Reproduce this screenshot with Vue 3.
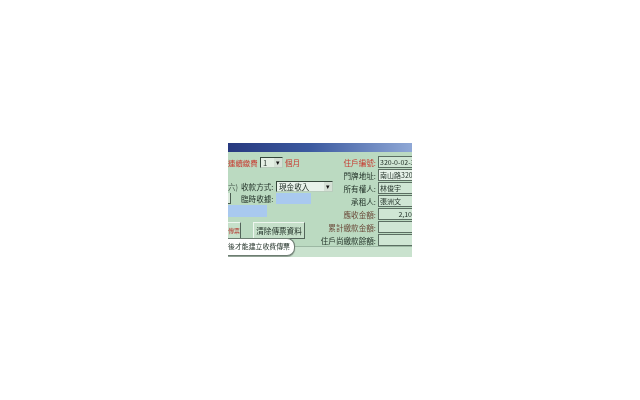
<script setup>
const fields = [
  { label: '住戶編號:', value: '320-0-02-3', red: true },
  { label: '門牌地址:', value: '南山路320', dark: true },
  { label: '所有權人:', value: '林俊宇' },
  { label: '承租人:', value: '張洲文' },
  { label: '應收金額:', value: '2,10', amount: true, brown: true },
  { label: '累計繳款金額:', value: '', brown: true },
  { label: '住戶尚繳款餘額:', value: '' },
]
</script>

<template>
  <div class="page">
    <div class="window">
      <div class="titlebar"></div>
      <div class="body">
        <div class="left">
          <div class="row first">
            <span class="red term">連續繳費</span>
            <span class="select small"><b>1</b><i class="arrow">▾</i></span>
            <span class="red">個月</span>
          </div>
          <div class="row method">
            <span class="cut">六)</span>
            <span class="lab">收款方式:</span>
            <span class="select wide"><b>現金收入</b><i class="arrow">▾</i></span>
          </div>
          <div class="row receipt">
            <span class="stub"></span>
            <span class="lab">臨時收據:</span>
            <span class="blue receipt-input"></span>
          </div>
          <div class="blue long-input"></div>
          <div class="row buttons">
            <span class="btn red-btn">傳票</span>
            <span class="btn clear">清除傳票資料</span>
          </div>
        </div>
        <div class="right">
          <div v-for="f in fields" :key="f.label" class="field">
            <span class="flabel" :class="{ red: f.red, brown: f.brown }">{{ f.label }}</span>
            <span class="fvalue" :class="{ amount: f.amount, dark: f.dark }">{{ f.value }}</span>
          </div>
        </div>
      </div>
      <div class="footer"></div>
      <div class="bubble">後才能建立收費傳票</div>
    </div>
  </div>
</template>

<style>
html, body { margin: 0; background: #fff; }
</style>

<style scoped>
.page {
  width: 640px;
  height: 400px;
  box-sizing: border-box;
  padding: 143px 0 0 228px;
  background: #fff;
  overflow: hidden;
  font-family: "Noto Sans CJK TC", "Liberation Sans", sans-serif;
  font-size: 7.6px;
  color: #1f2e25;
}
.window {
  position: relative;
  display: flex;
  flex-direction: column;
  width: 184px;
  height: 114px;
  background: #bbdac1;
  overflow: hidden;
  filter: blur(0.35px);
}
.titlebar {
  height: 9px;
  flex-shrink: 0;
  background: linear-gradient(90deg, #27397f 0%, #3c5aa0 45%, #8fa8d6 100%);
}
.body { display: flex; flex: 1; padding-top: 4px; }
.left { width: 94px; flex-shrink: 0; display: flex; flex-direction: column; }
.row { display: flex; align-items: center; white-space: nowrap; }
.first { height: 12px; gap: 2px; }
.term { width: 30px; font-size: 7.4px; flex-shrink: 0; }
.red { color: #c8382e; }
.select {
  flex-shrink: 0;
  display: flex;
  align-items: center;
  justify-content: space-between;
  box-sizing: border-box;
  height: 11px;
  background: #e4efe4;
  border: 1px solid #34463a;
  border-right-color: #b9cdbd;
  border-bottom-color: #b9cdbd;
}
.select b { font-weight: 400; padding-left: 2px; }
.small { width: 23px; }
.wide { width: 57px; background: #e8f2ea; }
.arrow {
  width: 8px;
  height: 9px;
  background: #d5e0d5;
  font-style: normal;
  font-size: 7px;
  line-height: 9px;
  text-align: center;
  color: #111;
}
.method { height: 12px; margin-top: 12px; }
.cut { width: 13px; color: #46584c; flex-shrink: 0; }
.lab { width: 33px; margin-right: 2px; flex-shrink: 0; }
.receipt { height: 12px; }
.stub {
  width: 3px;
  height: 11px;
  margin-right: 10px;
  background: #dcebdd;
  border: solid #4a5c50;
  border-width: 0 1px 1px 0;
  box-sizing: border-box;
  flex-shrink: 0;
}
.blue { background: #a9c9ef; display: block; }
.receipt-input { width: 35px; height: 11px; flex-shrink: 0; }
.long-input { width: 39px; height: 12px; margin-top: 1px; }
.buttons { height: 17px; margin-top: 5px; gap: 12px; }
.btn {
  display: flex;
  align-items: center;
  justify-content: center;
  box-sizing: border-box;
  height: 17px;
  background: #c6e0ca;
  border: 1px solid #eef6ef;
  border-right-color: #53655a;
  border-bottom-color: #53655a;
  flex-shrink: 0;
}
.red-btn { width: 13px; color: #b4342c; border-left: 0; font-size: 5.8px; }
.clear { width: 52px; }
.right { width: 90px; display: flex; flex-direction: column; gap: 1px; }
.field { display: flex; align-items: center; height: 12px; white-space: nowrap; }
.flabel { width: 54px; flex-shrink: 0; display: flex; justify-content: flex-end; }
.brown { color: #6b4a3a; }
.fvalue {
  box-sizing: border-box;
  width: 34px;
  height: 12px;
  margin-left: 2px;
  padding-left: 1px;
  line-height: 10px;
  font-size: 7px;
  background: #cfe6d4;
  border: 1px solid #5b6e62;
  border-right: 0;
  flex-shrink: 0;
}
.dark { background: #e6f1e8; }
.amount { text-align: right; padding-right: 0; }
.footer {
  height: 12px;
  flex-shrink: 0;
  background: #c9e2ce;
  border-top: 1px solid #9cb8a3;
  box-sizing: border-box;
}
.bubble {
  position: absolute;
  left: 0;
  top: 95px;
  width: 67px;
  height: 18px;
  box-sizing: border-box;
  line-height: 15px;
  font-size: 6.9px;
  white-space: nowrap;
  background: #fff;
  border: 1px solid #6d7d72;
  border-left: 0;
  border-radius: 0 8px 8px 0;
  box-shadow: 0 1px 1px #8c9c90;
}
</style>
